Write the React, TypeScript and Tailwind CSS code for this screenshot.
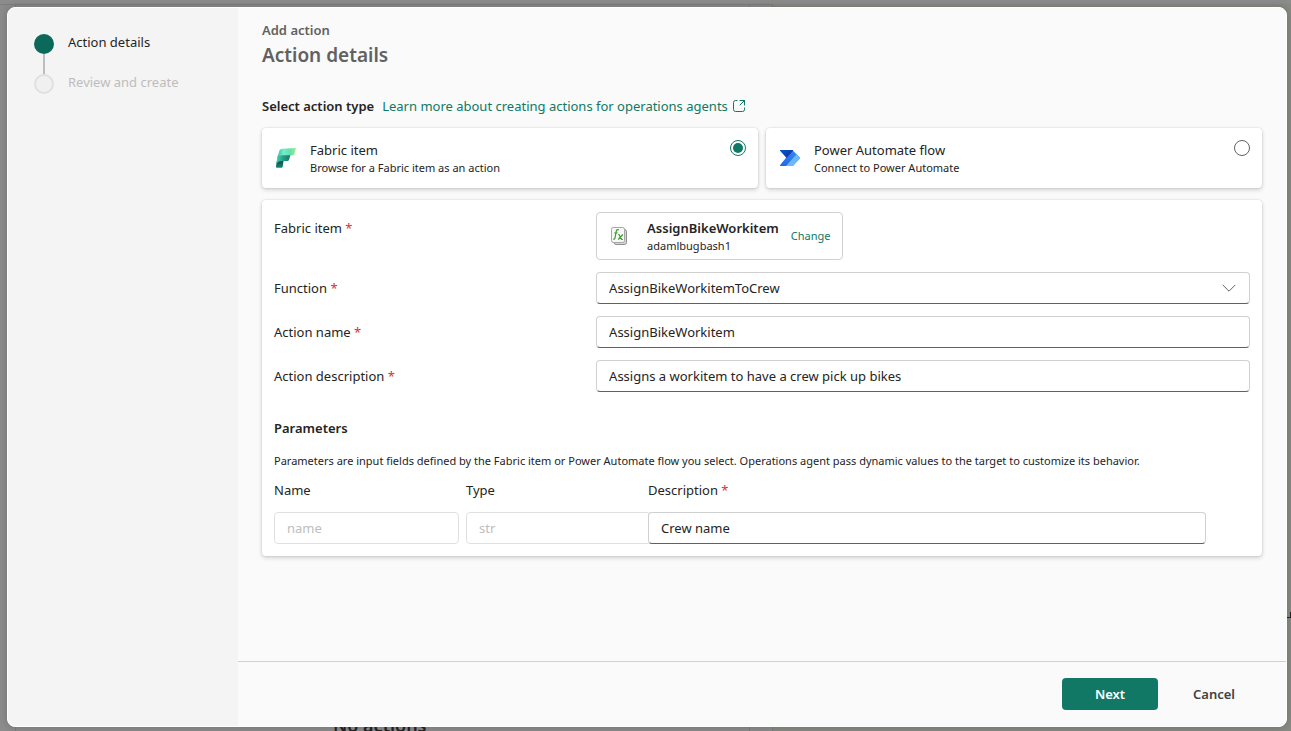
import { useState } from 'react'
import type { InputHTMLAttributes } from 'react'
import clsx from 'clsx'

type FieldLabelProps = {
  text: string;
  htmlFor: string;
  className?: string;
}

function FieldLabel({ text, htmlFor, className }: FieldLabelProps) {
  return (
    <label htmlFor={htmlFor} className={clsx('w-[33%] shrink-0', className)}>
      {text} <span className="text-[#d13438]">*</span>
    </label>
  )
}

function TextInput({ className, ...props }: InputHTMLAttributes<HTMLInputElement>) {
  return (
    <input
      type="text"
      className={clsx(
        'h-8 min-w-0 rounded border border-[#d1d1d1] border-b-[#616161] bg-white px-3 outline-none',
        'disabled:border-[#e0e0e0] disabled:text-[#bdbdbd]',
        className
      )}
      {...props}
    />
  )
}

function FabricIcon() {
  return (
    <svg width="24" height="24" viewBox="0 0 24 24" aria-hidden="true">
      <defs>
        <linearGradient id="fabTop" x1="0" y1="0" x2="1" y2="0">
          <stop offset="0" stopColor="#2fc2a2" />
          <stop offset="0.35" stopColor="#74ecc9" />
          <stop offset="0.7" stopColor="#63dfae" />
          <stop offset="1" stopColor="#a0f08a" />
        </linearGradient>
        <linearGradient id="fabMid" x1="0" y1="0" x2="1" y2="0">
          <stop offset="0" stopColor="#49d3ad" />
          <stop offset="0.5" stopColor="#259c86" />
          <stop offset="1" stopColor="#137a68" />
        </linearGradient>
        <linearGradient id="fabLow" x1="0" y1="0" x2="0" y2="1">
          <stop offset="0" stopColor="#0b4a48" />
          <stop offset="1" stopColor="#178575" />
        </linearGradient>
      </defs>
      <path d="M3 14.6 9.6 14 8.8 20.2c-.2.9-.8 1.6-1.8 1.6H3.4c-1.3 0-1.7-.8-1.4-1.9z" fill="url(#fabLow)" />
      <path d="M3.8 8.9 16.6 8.8 15 13.8c-.3.8-.8 1.2-1.7 1.2H7.6c-2.5 0-4.3 1.1-5.4 3z" fill="url(#fabMid)" />
      <path d="M5.2 5.2c.5-1.6 1.5-2.3 3-2.4L22 2l-1.6 6c-.3.8-.8 1.2-1.6 1.2H9.3c-3 0-5 1-6.1 3z" fill="url(#fabTop)" />
    </svg>
  )
}

function PowerAutomateIcon() {
  return (
    <svg width="24" height="24" viewBox="0 0 24 24" aria-hidden="true">
      <defs>
        <linearGradient id="paDark" x1="0" y1="0" x2="1" y2="0.6">
          <stop offset="0" stopColor="#0d54cf" />
          <stop offset="1" stopColor="#0b39a2" />
        </linearGradient>
        <linearGradient id="paMid" x1="0" y1="1" x2="1" y2="0">
          <stop offset="0" stopColor="#2266e3" />
          <stop offset="1" stopColor="#3a8bf5" />
        </linearGradient>
      </defs>
      <path d="M14.3 4 21.6 11.2a1.2 1.2 0 0 1 0 1.6L14.8 20H2.4a.5.5 0 0 1-.4-.8z" fill="url(#paMid)" />
      <path d="M18.6 8.2 21.6 11.2a1.2 1.2 0 0 1 0 1.6L15.1 19.7a1 1 0 0 1-.7.3H8z" fill="#6cb8fe" />
      <path d="M2.4 4H14.3c.5 0 .7.2 1 .5L8.6 12 2 4.8c-.3-.4-.1-.8.4-.8z" fill="url(#paDark)" />
    </svg>
  )
}

function FunctionIcon() {
  return (
    <svg width="24" height="24" viewBox="0 0 24 24" fill="none" aria-hidden="true">
      <path d="M7 5.5h10.5a2 2 0 0 1 2 2V18.5a2 2 0 0 1-2 2H9a2 2 0 0 1-2-2z" fill="#d6d6d6" stroke="#8f8f8f" />
      <rect x="4.5" y="3.5" width="13" height="15" rx="1.8" fill="#f7f7f7" stroke="#a6a6a6" />
      <path d="M11.8 5.9c-1.5-.6-2.3 0-2.6 1.6L8 13.8c-.2 1.2-.8 1.6-1.8 1.3M7.2 9h3.4" stroke="#3d9a32" strokeWidth="1.2" />
      <path d="M11.2 10.5h.8l2.7 5h1.2M15.9 10.5l-4.7 5" stroke="#3d9a32" strokeWidth="1.2" />
    </svg>
  )
}

function OpenIcon() {
  return (
    <svg width="14" height="14" viewBox="0 0 14 14" fill="none" stroke="currentColor" aria-hidden="true">
      <path d="M5 1.5H3.5a2 2 0 0 0-2 2v7a2 2 0 0 0 2 2h7a2 2 0 0 0 2-2V9" strokeLinecap="round" />
      <path d="M8 1.5h4.5V6M12.3 1.7 8 6" strokeLinecap="round" strokeLinejoin="round" />
    </svg>
  )
}

const actionTypes = [
  {
    id: 'fabric',
    title: 'Fabric item',
    description: 'Browse for a Fabric item as an action',
    Icon: FabricIcon,
  },
  {
    id: 'flow',
    title: 'Power Automate flow',
    description: 'Connect to Power Automate',
    Icon: PowerAutomateIcon,
  },
]

function Steps() {
  return (
    <nav aria-label="Steps" className="w-[230px] shrink-0 rounded-l-lg bg-[#f4f4f4] px-[26px] pt-6">
      <ol>
        <li className="flex gap-[14px]">
          <div className="flex flex-col items-center pt-0.5">
            <span className="size-5 rounded-full bg-[#0c695a]" />
            <span className="h-5 w-0.5 bg-[#bdbdbd]" />
          </div>
          <span>Action details</span>
        </li>
        <li className="flex gap-[14px] text-[#bdbdbd]">
          <span className="size-5 rounded-full border-2 border-[#e0e0e0] bg-[#f0f0f0]" />
          <span className="-mt-0.5">Review and create</span>
        </li>
      </ol>
    </nav>
  )
}

export default function App() {
  const [actionType, setActionType] = useState('fabric')
  const [actionName, setActionName] = useState('AssignBikeWorkitem')
  const [description, setDescription] = useState('Assigns a workitem to have a crew pick up bikes')
  const [paramDescription, setParamDescription] = useState('Crew name')

  return (
    <div className="relative h-screen overflow-hidden bg-[#8c8c8c] font-['Noto_Sans','Open_Sans',sans-serif] text-[13px] leading-5 text-[#242424]">
      {/* dimmed page behind the dialog */}
      <div aria-hidden="true" className="absolute inset-0">
        <div className="absolute inset-x-0 top-1 border-t border-[#7d7d7d]" />
        <div className="absolute top-1 bottom-0 left-[15px] w-[735px] border-x border-[#7d7d7d]" />
        <div className="absolute top-1 right-0 bottom-0 left-[772px] border-l border-[#7d7d7d] bg-[#888a84]" />
        <div className="absolute right-0 bottom-[113px] h-1.5 w-1 border-r border-b border-[#242424]" />
        <p className="absolute bottom-[-8px] left-[333px] text-lg font-semibold">No actions</p>
      </div>

      <div className="relative h-full pt-[7px] pr-1 pb-1 pl-[7px]">
        <div
          role="dialog"
          aria-labelledby="dialog-title"
          className="flex h-full rounded-lg border border-white bg-[#fafafa] shadow-[0_0_8px_rgba(0,0,0,0.2)]"
        >
          <Steps />

          <div className="flex min-w-0 flex-1 flex-col">
            <div className="flex-1 px-6 pt-3">
              <p className="font-semibold text-[#616161]">Add action</p>
              <h1 id="dialog-title" className="mt-px text-[19px] leading-7 font-semibold text-[#616161]">
                Action details
              </h1>

              <div className="mt-[27px] flex items-center gap-2">
                <h2 id="type-title" className="font-semibold">Select action type</h2>
                <a href="#" className="flex items-center gap-1 text-[#117865]">
                  Learn more about creating actions for operations agents
                  <OpenIcon />
                </a>
              </div>

              <div role="radiogroup" aria-labelledby="type-title" className="mt-3 grid grid-cols-2 gap-2">
                {actionTypes.map(({ id, title, description, Icon }) => (
                  <label
                    key={id}
                    className="flex h-15 items-center gap-3 rounded bg-white px-3 shadow-[0_0_2px_rgba(0,0,0,0.15),0_2px_4px_rgba(0,0,0,0.16)]"
                  >
                    <Icon />
                    <span className="flex flex-1 flex-col">
                      <span>{title}</span>
                      <span className="text-[11px] leading-4">{description}</span>
                    </span>
                    <input
                      type="radio"
                      name="actionType"
                      checked={actionType === id}
                      onChange={() => setActionType(id)}
                      className="mt-3 size-4 appearance-none self-start rounded-full border border-[#616161] bg-white bg-clip-content p-0.5 checked:border-[#117865] checked:bg-[#117865]"
                    />
                  </label>
                ))}
              </div>

              <div className="mt-3 rounded bg-white p-3 shadow-[0_0_2px_rgba(0,0,0,0.15),0_2px_4px_rgba(0,0,0,0.16)]">
                <div className="flex flex-col gap-3">
                  <div className="flex">
                    <FieldLabel text="Fabric item" htmlFor="change-item" className="pt-1.5" />
                    <div className="flex h-12 items-center rounded border border-[#d1d1d1] pr-3 pl-2.5">
                      <FunctionIcon />
                      <div className="ml-4 flex flex-col">
                        <span className="font-semibold">AssignBikeWorkitem</span>
                        <span className="text-[11px] leading-4">adamlbugbash1</span>
                      </div>
                      <button id="change-item" type="button" className="ml-3 text-[11px] leading-4 text-[#117865]">
                        Change
                      </button>
                    </div>
                  </div>

                  <div className="flex items-center">
                    <FieldLabel text="Function" htmlFor="function" />
                    <div className="relative flex-1">
                      <select
                        id="function"
                        className="h-8 w-full appearance-none rounded border border-[#d1d1d1] border-b-[#616161] bg-white px-3 outline-none"
                      >
                        <option>AssignBikeWorkitemToCrew</option>
                      </select>
                      <svg
                        width="14"
                        height="14"
                        viewBox="0 0 14 14"
                        fill="none"
                        stroke="#616161"
                        aria-hidden="true"
                        className="pointer-events-none absolute top-[9px] right-[14px]"
                      >
                        <path d="m1 4.2 6 6 6-6" strokeLinecap="round" strokeLinejoin="round" />
                      </svg>
                    </div>
                  </div>

                  <div className="flex items-center">
                    <FieldLabel text="Action name" htmlFor="action-name" />
                    <TextInput
                      id="action-name"
                      className="flex-1"
                      value={actionName}
                      onChange={(e) => setActionName(e.target.value)}
                    />
                  </div>

                  <div className="flex items-center">
                    <FieldLabel text="Action description" htmlFor="action-description" />
                    <TextInput
                      id="action-description"
                      className="flex-1"
                      value={description}
                      onChange={(e) => setDescription(e.target.value)}
                    />
                  </div>
                </div>

                <h2 className="mt-[26px] font-semibold">Parameters</h2>
                <p className="mt-[15px] text-[11px] leading-4">
                  Parameters are input fields defined by the Fabric item or Power Automate flow you select. Operations
                  agent pass dynamic values to the target to customize its behavior.
                </p>

                <div className="mt-[11px] grid grid-cols-[192px_182px_1fr] gap-y-3 pr-11">
                  <label htmlFor="param-name">Name</label>
                  <label htmlFor="param-type">Type</label>
                  <FieldLabel text="Description" htmlFor="param-description" />
                  <TextInput id="param-name" className="w-[185px]" value="name" disabled />
                  <TextInput id="param-type" className="w-[185px]" value="str" disabled />
                  <TextInput
                    id="param-description"
                    className="relative w-full"
                    value={paramDescription}
                    onChange={(e) => setParamDescription(e.target.value)}
                  />
                </div>
              </div>
            </div>

            <footer className="flex justify-end gap-2 border-t border-[#d1d1d1] px-6 py-4">
              <button type="button" className="h-8 w-24 rounded bg-[#117865] font-semibold text-white">
                Next
              </button>
              <button type="button" className="h-8 w-24 rounded font-semibold text-[#424242]">
                Cancel
              </button>
            </footer>
          </div>
        </div>
      </div>
    </div>
  )
}
